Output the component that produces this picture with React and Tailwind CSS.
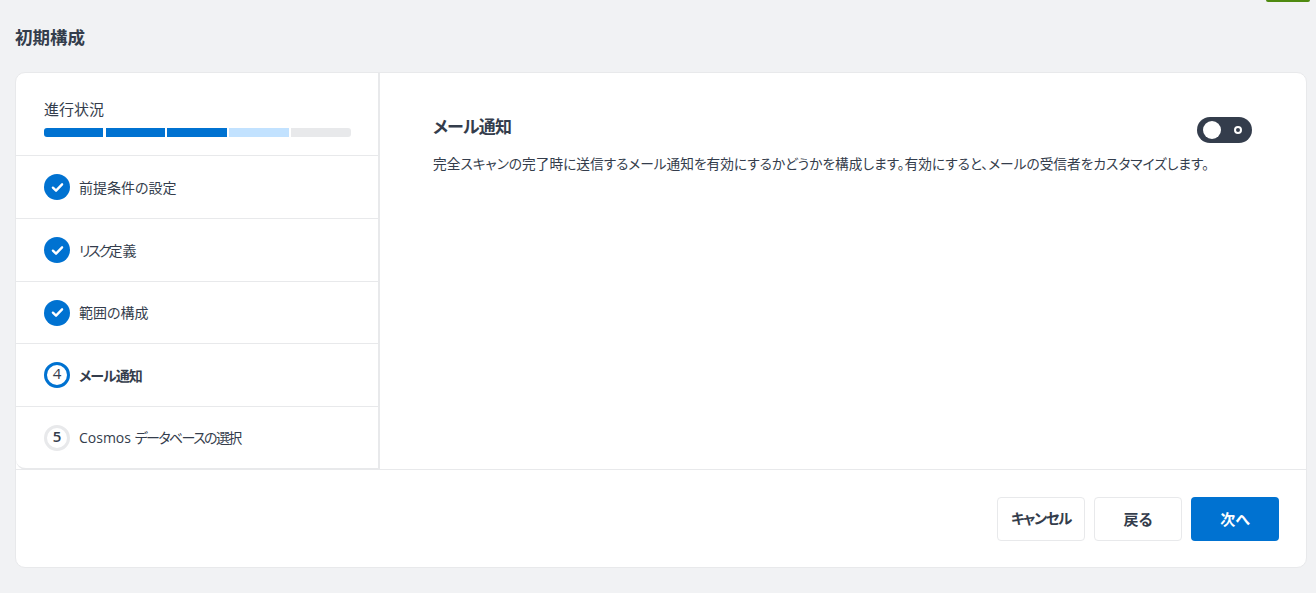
import React from "react";

function Check() {
  return (
    <div className="w-[26px] h-[26px] rounded-full bg-[#0072d1] flex items-center justify-center shrink-0">
      <svg width="13" height="11" viewBox="0 0 14 12" fill="none">
        <path d="M2 6.2 L5.4 9.4 L12 2.6" stroke="#fff" strokeWidth="2.6" strokeLinecap="round" strokeLinejoin="round" />
      </svg>
    </div>
  );
}

function Step({ icon, children, bold, h }) {
  return (
    <div className={`${h} border-b border-[#e8e9eb] last:border-b-0 pl-7 flex items-center gap-[9px]`}>
      {icon}
      <span className={`text-[14px] text-[#343d4c] ${bold ? "font-bold" : ""}`}>{children}</span>
    </div>
  );
}

export default function App() {
  return (
    <div className="w-[1316px] h-[593px] bg-[#f1f2f4] overflow-hidden font-['Open_Sans','Noto_Sans_CJK_JP',sans-serif] [font-feature-settings:'palt']">
      <div className="h-[2px] flex justify-end pr-[6px]">
        <div className="w-[44px] h-[2px] bg-[#4f8a10] rounded-b-[2px]"></div>
      </div>
      <h1 className="h-[70px] pl-[15px] pt-[24px] text-[17.5px] leading-[23px] font-bold text-[#343d4c]">初期構成</h1>
      <div className="ml-[15px] w-[1292px] h-[496px] bg-white border border-[#e8e9eb] rounded-[10px] flex flex-col">
        <div className="h-[397px] flex">
          <div className="w-[364px] h-[397px] border-r-2 border-b-2 border-[#e8e9eb] rounded-bl-[10px] flex flex-col shrink-0">
            <div className="h-[83px] border-b border-[#e8e9eb] pl-7 pt-[26px]">
              <div className="text-[15px] leading-[21px] text-[#343d4c]">進行状況</div>
              <div className="mt-[8px] w-[307px] h-[9px] flex gap-[2px] rounded-[3px] overflow-hidden">
                <div className="w-[59px] mr-[1px] bg-[#0072d1]"></div>
                <div className="w-[59px] bg-[#0072d1]"></div>
                <div className="w-[60px] bg-[#0072d1]"></div>
                <div className="w-[60px] bg-[#c2e2ff]"></div>
                <div className="w-[60px] bg-[#e8e9eb]"></div>
              </div>
            </div>
            <Step h="h-[63px]" icon={<Check />}>前提条件の設定</Step>
            <Step h="h-[63px]" icon={<Check />}>
              <span className="tracking-[-2.4px]">リスク</span>定義
            </Step>
            <Step h="h-[62px]" icon={<Check />}>範囲の構成</Step>
            <Step
              h="h-[63px]"
              bold
              icon={
                <div className="w-[26px] h-[26px] rounded-full border-[3px] border-[#0072d1] flex items-center justify-center text-[15px] text-[#343d4c] shrink-0 pb-[3px]">4</div>
              }
            >
              <span className="tracking-[-1px]">メール通知</span>
            </Step>
            <Step
              h="h-[61px]"
              icon={
                <div className="w-[26px] h-[26px] rounded-full border-[3px] border-[#e8e9eb] flex items-center justify-center text-[15px] font-semibold text-[#343d4c] shrink-0 pb-[3px]">5</div>
              }
            >
              Cosmos <span className="tracking-[-1.6px]">データベースの選択</span>
            </Step>
          </div>
          <div className="flex-1 pl-[53px] pr-[54px] pt-[42px]">
            <div className="flex items-start justify-between">
              <h2 className="text-[17px] leading-[24px] font-bold tracking-[-0.8px] text-[#343d4c]">メール通知</h2>
              <div className="w-[55px] h-[26px] mt-[2px] rounded-full bg-[#343d4c] flex items-center justify-between pl-[6px] pr-[10px]">
                <div className="w-[18px] h-[18px] rounded-full bg-white"></div>
                <div className="w-[8px] h-[8px] rounded-full border-2 border-white"></div>
              </div>
            </div>
            <p className="mt-[11px] text-[13.7px] leading-[20px] text-[#343d4c] whitespace-nowrap">完全スキャンの完了時に送信するメール通知を有効にするかどうかを構成します。有効にすると、メールの受信者をカスタマイズします。</p>
          </div>
        </div>
        <div className="flex-1 border-t border-[#e8e9eb] -mt-[1px] flex items-start justify-end gap-[9px] pt-[27px] pr-[27px]">
          <button className="w-[88px] h-[44px] bg-white border border-[#e8e9eb] rounded-[4px] text-[14.5px] tracking-[-1.4px] font-bold text-[#343d4c]">キャンセル</button>
          <button className="w-[88px] h-[44px] bg-white border border-[#e8e9eb] rounded-[4px] text-[15px] font-bold text-[#343d4c]">戻る</button>
          <button className="w-[88px] h-[44px] bg-[#0072d1] rounded-[4px] text-[15px] font-bold text-white">次へ</button>
        </div>
      </div>
    </div>
  );
}
